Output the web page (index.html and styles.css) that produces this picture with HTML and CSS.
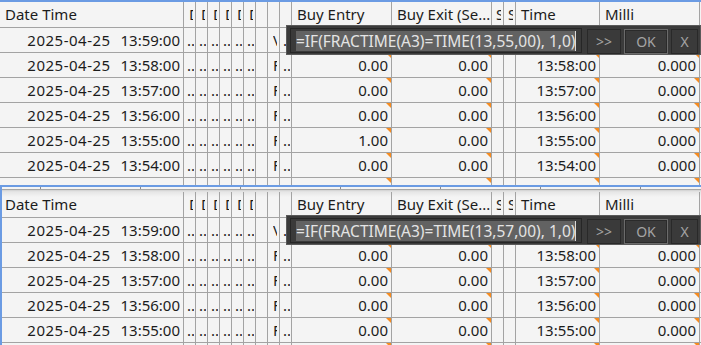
FILE: index.html
```html
<!DOCTYPE html>
<html>
	<head>
		<meta charset="utf-8" />
		<title>Grid</title>
		<link rel="stylesheet" href="styles.css">
	</head>
	<body>
		<div class="pane top">
			<div class="row head">
				<div class="cell dt">Date Time</div>
				<div class="cell n"><span class="l">Dir</span></div>
				<div class="cell n"><span class="l">Day</span></div>
				<div class="cell n"><span class="l">Dev</span></div>
				<div class="cell n"><span class="l">Dur</span></div>
				<div class="cell n"><span class="l">Dn</span></div>
				<div class="cell n"><span class="l">Dt</span></div>
				<div class="cell n"></div>
				<div class="cell n"></div>
				<div class="cell n"></div>
				<div class="cell be">Buy Entry</div>
				<div class="cell bx">Buy Exit (Se...</div>
				<div class="cell s"><span>S</span></div>
				<div class="cell s"><span>S</span></div>
				<div class="cell tm">Time</div>
				<div class="cell mi">Milli</div>
			</div>
			<div class="row">
				<div class="cell dt"><span class="d">2025-04-25</span>  13:59:00</div>
				<div class="cell n"><span>..</span></div><div class="cell n"><span>..</span></div><div class="cell n"><span>..</span></div>
				<div class="cell n"><span>..</span></div><div class="cell n"><span>..</span></div><div class="cell n"><span>..</span></div>
				<div class="cell n"></div>
				<div class="cell n"><span class="l">V</span></div>
				<div class="cell n"><span>..</span></div>
				<div class="cell be num tri">0.00</div>
				<div class="cell bx num tri">0.00</div>
				<div class="cell s"></div><div class="cell s"></div>
				<div class="cell tm num tri">13:59:00</div>
				<div class="cell mi num tri">0.000</div>
			</div>
			<div class="row">
				<div class="cell dt"><span class="d">2025-04-25</span>  13:58:00</div>
				<div class="cell n"><span>..</span></div><div class="cell n"><span>..</span></div><div class="cell n"><span>..</span></div>
				<div class="cell n"><span>..</span></div><div class="cell n"><span>..</span></div><div class="cell n"><span>..</span></div>
				<div class="cell n"></div>
				<div class="cell n"><span class="l">F</span></div>
				<div class="cell n"><span>..</span></div>
				<div class="cell be num tri">0.00</div>
				<div class="cell bx num tri">0.00</div>
				<div class="cell s"></div><div class="cell s"></div>
				<div class="cell tm num tri">13:58:00</div>
				<div class="cell mi num tri">0.000</div>
			</div>
			<div class="row">
				<div class="cell dt"><span class="d">2025-04-25</span>  13:57:00</div>
				<div class="cell n"><span>..</span></div><div class="cell n"><span>..</span></div><div class="cell n"><span>..</span></div>
				<div class="cell n"><span>..</span></div><div class="cell n"><span>..</span></div><div class="cell n"><span>..</span></div>
				<div class="cell n"></div>
				<div class="cell n"><span class="l">F</span></div>
				<div class="cell n"><span>..</span></div>
				<div class="cell be num tri">0.00</div>
				<div class="cell bx num tri">0.00</div>
				<div class="cell s"></div><div class="cell s"></div>
				<div class="cell tm num tri">13:57:00</div>
				<div class="cell mi num tri">0.000</div>
			</div>
			<div class="row">
				<div class="cell dt"><span class="d">2025-04-25</span>  13:56:00</div>
				<div class="cell n"><span>..</span></div><div class="cell n"><span>..</span></div><div class="cell n"><span>..</span></div>
				<div class="cell n"><span>..</span></div><div class="cell n"><span>..</span></div><div class="cell n"><span>..</span></div>
				<div class="cell n"></div>
				<div class="cell n"><span class="l">F</span></div>
				<div class="cell n"><span>..</span></div>
				<div class="cell be num tri">0.00</div>
				<div class="cell bx num tri">0.00</div>
				<div class="cell s"></div><div class="cell s"></div>
				<div class="cell tm num tri">13:56:00</div>
				<div class="cell mi num tri">0.000</div>
			</div>
			<div class="row">
				<div class="cell dt"><span class="d">2025-04-25</span>  13:55:00</div>
				<div class="cell n"><span>..</span></div><div class="cell n"><span>..</span></div><div class="cell n"><span>..</span></div>
				<div class="cell n"><span>..</span></div><div class="cell n"><span>..</span></div><div class="cell n"><span>..</span></div>
				<div class="cell n"></div>
				<div class="cell n"><span class="l">F</span></div>
				<div class="cell n"><span>..</span></div>
				<div class="cell be num tri">1.00</div>
				<div class="cell bx num tri">0.00</div>
				<div class="cell s"></div><div class="cell s"></div>
				<div class="cell tm num tri">13:55:00</div>
				<div class="cell mi num tri">0.000</div>
			</div>
			<div class="row">
				<div class="cell dt"><span class="d">2025-04-25</span>  13:54:00</div>
				<div class="cell n"><span>..</span></div><div class="cell n"><span>..</span></div><div class="cell n"><span>..</span></div>
				<div class="cell n"><span>..</span></div><div class="cell n"><span>..</span></div><div class="cell n"><span>..</span></div>
				<div class="cell n"></div>
				<div class="cell n"><span class="l">F</span></div>
				<div class="cell n"><span>..</span></div>
				<div class="cell be num tri">0.00</div>
				<div class="cell bx num tri">0.00</div>
				<div class="cell s"></div><div class="cell s"></div>
				<div class="cell tm num tri">13:54:00</div>
				<div class="cell mi num tri">0.000</div>
			</div>
			<div class="row part">
				<div class="cell dt"></div>
				<div class="cell n"></div><div class="cell n"></div><div class="cell n"></div>
				<div class="cell n"></div><div class="cell n"></div><div class="cell n"></div>
				<div class="cell n"></div><div class="cell n"></div><div class="cell n"></div>
				<div class="cell be tri"></div>
				<div class="cell bx tri"></div>
				<div class="cell s"></div><div class="cell s"></div>
				<div class="cell tm tri"></div>
				<div class="cell mi tri"></div>
			</div>

			<div class="popup">
				<div class="input"><span class="sel">=IF(FRACTIME(A3)=TIME(13,55,00), 1,0)</span></div>
				<div class="btn more">&gt;&gt;</div>
				<div class="btn ok">OK</div>
				<div class="btn close">X</div>
			</div>
		</div>

		<div class="pane bottom">
			<div class="split"></div>
			<div class="row head">
				<div class="cell dt">Date Time</div>
				<div class="cell n"><span class="l">Dir</span></div>
				<div class="cell n"><span class="l">Day</span></div>
				<div class="cell n"><span class="l">Dev</span></div>
				<div class="cell n"><span class="l">Dur</span></div>
				<div class="cell n"><span class="l">Dn</span></div>
				<div class="cell n"><span class="l">Dt</span></div>
				<div class="cell n"></div>
				<div class="cell n"></div>
				<div class="cell n"></div>
				<div class="cell be">Buy Entry</div>
				<div class="cell bx">Buy Exit (Se...</div>
				<div class="cell s"><span>S</span></div>
				<div class="cell s"><span>S</span></div>
				<div class="cell tm">Time</div>
				<div class="cell mi">Milli</div>
			</div>
			<div class="row">
				<div class="cell dt"><span class="d">2025-04-25</span>  13:59:00</div>
				<div class="cell n"><span>..</span></div><div class="cell n"><span>..</span></div><div class="cell n"><span>..</span></div>
				<div class="cell n"><span>..</span></div><div class="cell n"><span>..</span></div><div class="cell n"><span>..</span></div>
				<div class="cell n"></div>
				<div class="cell n"><span class="l">V</span></div>
				<div class="cell n"><span>..</span></div>
				<div class="cell be num tri">0.00</div>
				<div class="cell bx num tri">0.00</div>
				<div class="cell s"></div><div class="cell s"></div>
				<div class="cell tm num tri">13:59:00</div>
				<div class="cell mi num tri">0.000</div>
			</div>
			<div class="row">
				<div class="cell dt"><span class="d">2025-04-25</span>  13:58:00</div>
				<div class="cell n"><span>..</span></div><div class="cell n"><span>..</span></div><div class="cell n"><span>..</span></div>
				<div class="cell n"><span>..</span></div><div class="cell n"><span>..</span></div><div class="cell n"><span>..</span></div>
				<div class="cell n"></div>
				<div class="cell n"><span class="l">F</span></div>
				<div class="cell n"><span>..</span></div>
				<div class="cell be num tri">0.00</div>
				<div class="cell bx num tri">0.00</div>
				<div class="cell s"></div><div class="cell s"></div>
				<div class="cell tm num tri">13:58:00</div>
				<div class="cell mi num tri">0.000</div>
			</div>
			<div class="row">
				<div class="cell dt"><span class="d">2025-04-25</span>  13:57:00</div>
				<div class="cell n"><span>..</span></div><div class="cell n"><span>..</span></div><div class="cell n"><span>..</span></div>
				<div class="cell n"><span>..</span></div><div class="cell n"><span>..</span></div><div class="cell n"><span>..</span></div>
				<div class="cell n"></div>
				<div class="cell n"><span class="l">F</span></div>
				<div class="cell n"><span>..</span></div>
				<div class="cell be num tri">0.00</div>
				<div class="cell bx num tri">0.00</div>
				<div class="cell s"></div><div class="cell s"></div>
				<div class="cell tm num tri">13:57:00</div>
				<div class="cell mi num tri">0.000</div>
			</div>
			<div class="row">
				<div class="cell dt"><span class="d">2025-04-25</span>  13:56:00</div>
				<div class="cell n"><span>..</span></div><div class="cell n"><span>..</span></div><div class="cell n"><span>..</span></div>
				<div class="cell n"><span>..</span></div><div class="cell n"><span>..</span></div><div class="cell n"><span>..</span></div>
				<div class="cell n"></div>
				<div class="cell n"><span class="l">F</span></div>
				<div class="cell n"><span>..</span></div>
				<div class="cell be num tri">0.00</div>
				<div class="cell bx num tri">0.00</div>
				<div class="cell s"></div><div class="cell s"></div>
				<div class="cell tm num tri">13:56:00</div>
				<div class="cell mi num tri">0.000</div>
			</div>
			<div class="row">
				<div class="cell dt"><span class="d">2025-04-25</span>  13:55:00</div>
				<div class="cell n"><span>..</span></div><div class="cell n"><span>..</span></div><div class="cell n"><span>..</span></div>
				<div class="cell n"><span>..</span></div><div class="cell n"><span>..</span></div><div class="cell n"><span>..</span></div>
				<div class="cell n"></div>
				<div class="cell n"><span class="l">F</span></div>
				<div class="cell n"><span>..</span></div>
				<div class="cell be num tri">0.00</div>
				<div class="cell bx num tri">0.00</div>
				<div class="cell s"></div><div class="cell s"></div>
				<div class="cell tm num tri">13:55:00</div>
				<div class="cell mi num tri">0.000</div>
			</div>
			<div class="row">
				<div class="cell dt"><span class="d">2025-04-25</span>  13:54:00</div>
				<div class="cell n"></div><div class="cell n"></div><div class="cell n"></div>
				<div class="cell n"></div><div class="cell n"></div><div class="cell n"></div>
				<div class="cell n"></div><div class="cell n"></div><div class="cell n"></div>
				<div class="cell be num tri">0.00</div>
				<div class="cell bx num tri">0.00</div>
				<div class="cell s"></div><div class="cell s"></div>
				<div class="cell tm num tri">13:54:00</div>
				<div class="cell mi num tri">0.000</div>
			</div>

			<div class="popup">
				<div class="input"><span class="sel">=IF(FRACTIME(A3)=TIME(13,57,00), 1,0)</span></div>
				<div class="btn more">&gt;&gt;</div>
				<div class="btn ok">OK</div>
				<div class="btn close">X</div>
			</div>
		</div>
	</body>
</html>
```

FILE: styles.css
```css
*{margin: 0;padding: 0;box-sizing: border-box;}
html,body{height: 345px;overflow: hidden;}
body{background-color: #f4f4f4;
font-family: "Noto Sans", "Open Sans", sans-serif;
font-size: 15px;
color: #1c1c1c;
}

/* two panes of the same grid */
.pane{position: relative;overflow: hidden;}
.top{height: 185px;
border-top: 2px solid #6b9be3;
}
.bottom{height: 160px;
border-top: 2px solid #6b9be3;
border-left: 2px solid #6b9be3;
}
.split{height: 5px;
background:
	repeating-linear-gradient(90deg, transparent 0 38px, #8c8c8c 38px 39px, transparent 39px 100px) top left / 100% 2px no-repeat,
	linear-gradient(#f4f4f4 0 2px, #a6a6a6 2px 3px, #d6d6d6 3px 4px, #e2e2e2 4px 5px);
}

/* rows and cells */
.row{display: flex;height: 25px;border-bottom: 1px solid #a3a3a3;}
.row.head{height: 26px;}
.row.part{height: 8px;border-bottom: none;}
.bottom .row.head{background: linear-gradient(#e6e6e6, #f4f4f4 5px);}

.cell{flex: none;position: relative;
border-right: 1px solid #a3a3a3;
overflow: hidden;white-space: nowrap;
padding: 1px 0 0 5px;
line-height: 23px;
}
.head .cell{padding-top: 1px;}
.num{text-align: right;padding-left: 0;padding-right: 3px;}

.dt{width: 184px;white-space: pre;text-align: right;padding-right: 3px;word-spacing: 1px;}
.dt .d{letter-spacing: .5px;}
.head .dt{text-align: left;word-spacing: 0;}
.bottom .dt{width: 182px;}
.bottom .head .dt{padding-left: 3px;}
.n{width: 12px;padding-left: 3px;}
.n span{display: block;width: 7px;overflow: hidden;}
.n .l{margin-left: 2px;width: 4px;}
.be, .bx, .mi{width: 100px;}
.s{width: 12px;padding-left: 4px;}
.s span{display: block;width: 5px;overflow: hidden;}
.tm{width: 84px;}

/* small orange flag in the corner */
.tri::after{content: "";position: absolute;top: 0;right: 0;
border-top: 5px solid #f68b1f;
border-left: 5px solid transparent;
}

/* formula editor box */
.popup{position: absolute;left: 286px;top: 23px;
width: 415px;height: 30px;
display: flex;align-items: flex-start;
padding: 2px 0 0 3px;
background-color: #3b3b3b;
border: 1px solid #5a5a5a;
}
.bottom .popup{left: 284px;top: 28px;}
.input{width: 292px;height: 25px;
display: flex;align-items: center;
padding-left: 5px;
background-color: #3a3a3a;
border: 1px solid #262626;
}
.sel{position: relative;
font-size: 15.5px;line-height: 20px;
color: #e4e4e4;
background-color: #626262;
white-space: nowrap;
}
.sel::after{content: "";position: absolute;right: -1px;top: 0;
width: 1px;height: 20px;background-color: #d8d8d8;
}
.btn{height: 25px;margin-top: 1px;margin-left: 3px;
display: flex;align-items: center;justify-content: center;
font-size: 14px;color: #a4a4a4;
background-color: #3a3a3a;
border: 1px solid #292929;
}
.more{width: 34px;margin-left: 5px;}
.ok{width: 44px;border-color: #6b6b6b;box-shadow: inset 0 0 0 1px #2a2a2a;}
.close{width: 27px;}
```
